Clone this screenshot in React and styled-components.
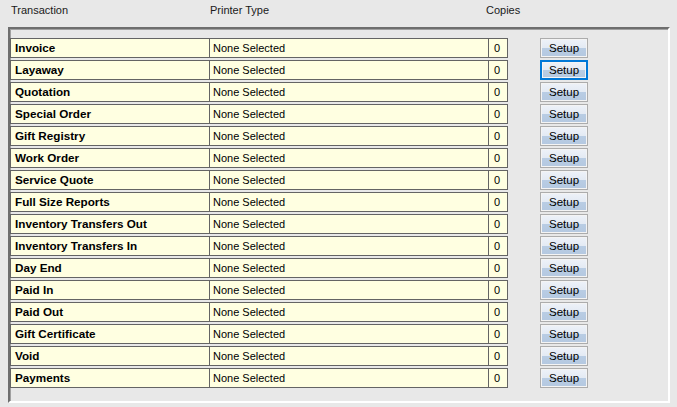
import React from 'react'
import styled, { createGlobalStyle } from 'styled-components'

const transactions = [
  'Invoice',
  'Layaway',
  'Quotation',
  'Special Order',
  'Gift Registry',
  'Work Order',
  'Service Quote',
  'Full Size Reports',
  'Inventory Transfers Out',
  'Inventory Transfers In',
  'Day End',
  'Paid In',
  'Paid Out',
  'Gift Certificate',
  'Void',
  'Payments',
]

const GlobalStyle = createGlobalStyle`
  html, body {
    margin: 0;
    padding: 0;
    background: #e8e8e8;
  }
  body {
    font-family: "Liberation Sans", Arial, sans-serif;
    font-size: 11px;
    color: #000;
  }
`

const Page = styled.div`
  width: 677px;
  height: 407px;
  background: #e8e8e8;
  overflow: hidden;
`

const Header = styled.div`
  display: grid;
  grid-template-columns: 199px 276px 80px;
  height: 27px;
  padding-left: 11px;
  padding-top: 4px;
  box-sizing: border-box;
  color: #1a1a1a;
`

const HeaderLabel = styled.div``

const Panel = styled.div`
  margin-left: 8px;
  width: 662px;
  height: 376px;
  box-sizing: border-box;
  border-top: 2px solid #6e6e6e;
  border-left: 2px solid #6e6e6e;
  border-right: 2px solid #ffffff;
  border-bottom: 2px solid #ffffff;
  box-shadow: inset 1px 1px 0 #a0a0a0;
  padding: 9px 0 0 0;
  display: flex;
  flex-direction: column;
  gap: 2px;
`

const Row = styled.div`
  display: flex;
  align-items: center;
  height: 20px;
`

const Cells = styled.div`
  display: grid;
  grid-template-columns: 198px 279px 19px;
  height: 20px;
  box-sizing: border-box;
  border: 1px solid #646464;
  background: #ffffe1;
`

const Cell = styled.div`
  display: flex;
  align-items: center;
  padding-left: ${p => p.$pad}px;
  padding-bottom: ${p => (p.$bold ? 1 : 0)}px;
  border-left: ${p => (p.$first ? 'none' : '1px solid #646464')};
  font-weight: ${p => (p.$bold ? 700 : 400)};
  font-size: ${p => (p.$bold ? '11.7px' : '11px')};
  line-height: 13px;
  color: #000;
  white-space: nowrap;
  overflow: hidden;
`

const SetupButton = styled.button`
  margin-left: 32px;
  width: 48px;
  height: 20px;
  box-sizing: border-box;
  padding: 0;
  font-family: "Liberation Sans", Arial, sans-serif;
  font-size: 11.5px;
  color: #000;
  border: ${p => (p.$focused ? '2px solid #0078d7' : '1px solid #acacac')};
  box-shadow: inset 0 0 0 1px #f4f4f4;
  background: linear-gradient(to bottom, #eef2f8 0%, #e3eaf4 50%, #b9cde4 50%, #b4c8e0 100%);
  cursor: pointer;
`

const App = () => {
  return (
    <Page>
      <GlobalStyle />
      <Header>
        <HeaderLabel>Transaction</HeaderLabel>
        <HeaderLabel>Printer Type</HeaderLabel>
        <HeaderLabel>Copies</HeaderLabel>
      </Header>
      <Panel>
        {transactions.map((name, i) => (
          <Row key={name}>
            <Cells>
              <Cell $first $bold $pad={4}>{name}</Cell>
              <Cell $pad={3}>None Selected</Cell>
              <Cell $pad={5}>0</Cell>
            </Cells>
            <SetupButton $focused={i === 1}>Setup</SetupButton>
          </Row>
        ))}
      </Panel>
    </Page>
  )
}

export default App
